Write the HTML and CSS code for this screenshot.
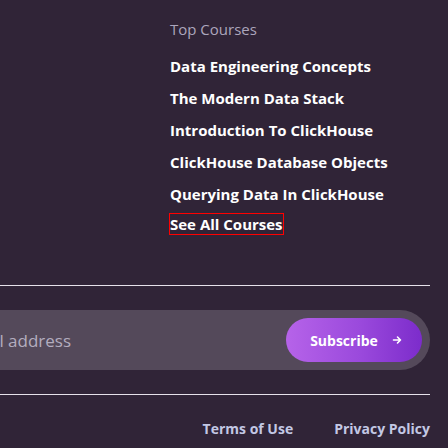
FILE: index.html
```html
<!DOCTYPE html>
<html lang="en">
<head>
<meta charset="utf-8">
<title>Footer</title>
<link rel="stylesheet" href="styles.css">
</head>
<body>
<footer class="footer">
  <section class="courses">
    <h3 class="courses-title">Top Courses</h3>
    <ul class="course-list">
      <li><a href="#">Data Engineering Concepts</a></li>
      <li><a href="#">The Modern Data Stack</a></li>
      <li><a href="#">Introduction To ClickHouse</a></li>
      <li><a href="#">ClickHouse Database Objects</a></li>
      <li><a href="#">Querying Data In ClickHouse</a></li>
      <li class="see-all-item"><a href="#" class="see-all">See All Courses</a></li>
    </ul>
  </section>
  <hr class="rule">
  <form class="subscribe">
    <input class="email" type="email" placeholder="Enter your email address">
    <button class="btn" type="button">Subscribe <span class="arrow">
      <svg width="10" height="10" viewBox="0 0 10 10" fill="none" stroke="#fff" stroke-width="1.6" stroke-linecap="round" stroke-linejoin="round"><path d="M1.5 5h7M5.5 2l3 3-3 3"/></svg>
    </span></button>
  </form>
  <hr class="rule">
  <nav class="legal">
    <a href="#">Terms of Use</a>
    <a href="#">Privacy Policy</a>
  </nav>
</footer>
</body>
</html>
```
FILE: styles.css
```css
* { box-sizing: border-box; }
html, body { margin: 0; padding: 0; }
body {
  background: #302437;
  font-family: "Open Sans", "DejaVu Sans", sans-serif;
  overflow: hidden;
  width: 448px;
  height: 448px;
}
.footer {
  width: 430px;
}
.courses {
  padding: 17px 0 0 170px;
}
.courses-title {
  margin: 0 0 9px;
  font-size: 15px;
  line-height: 24px;
  font-weight: 400;
  color: #aca6bc;
}
.course-list {
  list-style: none;
  margin: 0;
  padding: 0;
  display: flex;
  flex-direction: column;
  align-items: flex-start;
}
.course-list li {
  line-height: 32px;
}
.course-list a {
  color: #ffffff;
  text-decoration: none;
  font-size: 15px;
  font-weight: 700;
}
.course-list .see-all-item {
  line-height: 28px;
}
.see-all {
  outline: 1px solid #ff0000;
  display: inline-block;
  line-height: 20px;
}
.rule {
  border: 0;
  height: 1px;
  background: #e6e1ea;
  margin: 0;
}
.courses + .rule { margin-top: 47px; }
.subscribe {
  display: flex;
  align-items: center;
  margin: 24px 0 0 -151px;
  width: 581px;
  height: 60px;
  padding: 0 8px 0 24px;
  background: #54495a;
  border-radius: 0 30px 30px 0;
}
.email {
  flex: 1;
  min-width: 0;
  background: transparent;
  border: 0;
  padding: 0;
  font-family: inherit;
  font-size: 17px;
  color: #fff;
  outline: none;
}
.email::placeholder { color: #b3adbf; }
.btn {
  flex: none;
  width: 136px;
  height: 44px;
  border: 0;
  border-radius: 22px;
  background: linear-gradient(90deg, #b663e9 0%, #9a49dc 55%, #7c2ccb 100%);
  color: #fff;
  font-family: inherit;
  font-size: 14px;
  font-weight: 700;
  display: flex;
  align-items: center;
  justify-content: center;
  gap: 14px;
  padding: 0 0 0 4px;
}
.arrow { display: flex; }
.subscribe + .rule { margin-top: 24px; }
.legal {
  display: flex;
  justify-content: flex-end;
  gap: 41px;
  padding-top: 22px;
}
.legal a {
  color: #c3c8e4;
  text-decoration: none;
  font-size: 14px;
  font-weight: 700;
  line-height: 24px;
}
```
